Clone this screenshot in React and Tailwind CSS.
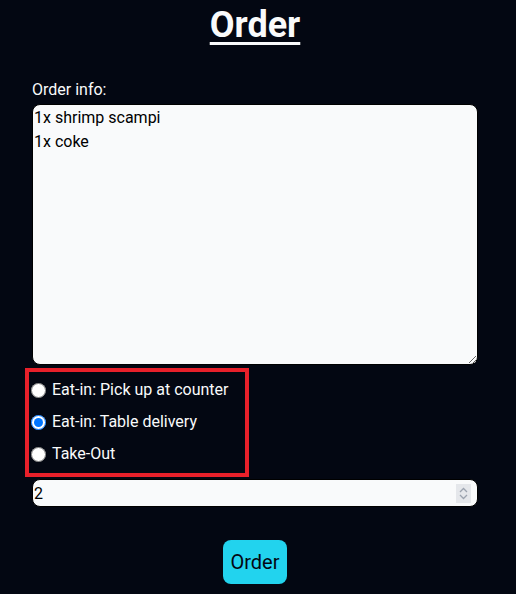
export default function App() {
  return (
    <div className="min-h-[594px] w-full bg-[#030712] text-[#f9fafb] font-['Roboto',sans-serif]">
      <div className="pl-8 w-[478px] flex flex-col">
        <h1 className="pt-[5px] h-[46px] text-[36px] leading-10 font-bold underline underline-offset-[5px] decoration-[3px] text-center">
          Order
        </h1>
        <label className="mt-8 block text-base leading-6">Order info:</label>
        <textarea
          className="mt-[2px] w-[446px] h-[261px] rounded-lg bg-[#f9fafb] text-black border border-black p-[1px] text-base leading-6 block"
          defaultValue={"1x shrimp scampi\n1x coke"}
        />
        <fieldset className="mt-[3px] ml-[-7px] w-[224px] border-4 border-[#e8202a] pt-[2px] pb-[3px]">
          {[
            ["Eat-in: Pick up at counter", false],
            ["Eat-in: Table delivery", true],
            ["Take-Out", false],
          ].map(([label, checked]) => (
            <label key={label} className="flex items-center h-8 text-base">
              <input
                type="radio"
                name="mode"
                defaultChecked={checked}
                className="w-[15px] h-[15px] ml-[2px] mr-[6px] mt-[1px]"
              />
              <span>{label}</span>
            </label>
          ))}
        </fieldset>
        <div className="relative mt-[2px] w-[446px] h-7">
          <input
            type="number"
            defaultValue={2}
            className="w-full h-full rounded-lg bg-[#f9fafb] text-black border border-black px-[1px] text-base"
          />
          <div className="absolute right-[7px] top-[5px] w-[15px] h-[19px] bg-[#e5e7eb] flex flex-col items-center justify-center gap-[1px] pointer-events-none">
            <svg width="9" height="6" viewBox="0 0 9 6" fill="none" stroke="#9ca3af" strokeWidth="1.3">
              <path d="M1 5 L4.5 1.5 L8 5" />
            </svg>
            <svg width="9" height="6" viewBox="0 0 9 6" fill="none" stroke="#9ca3af" strokeWidth="1.3">
              <path d="M1 1 L4.5 4.5 L8 1" />
            </svg>
          </div>
        </div>
        <div className="w-[446px] flex justify-center mt-[33px]">
          <button className="w-16 h-11 rounded-lg bg-[#22d3ee] text-[#030712] text-xl">
            Order
          </button>
        </div>
      </div>
    </div>
  );
}
